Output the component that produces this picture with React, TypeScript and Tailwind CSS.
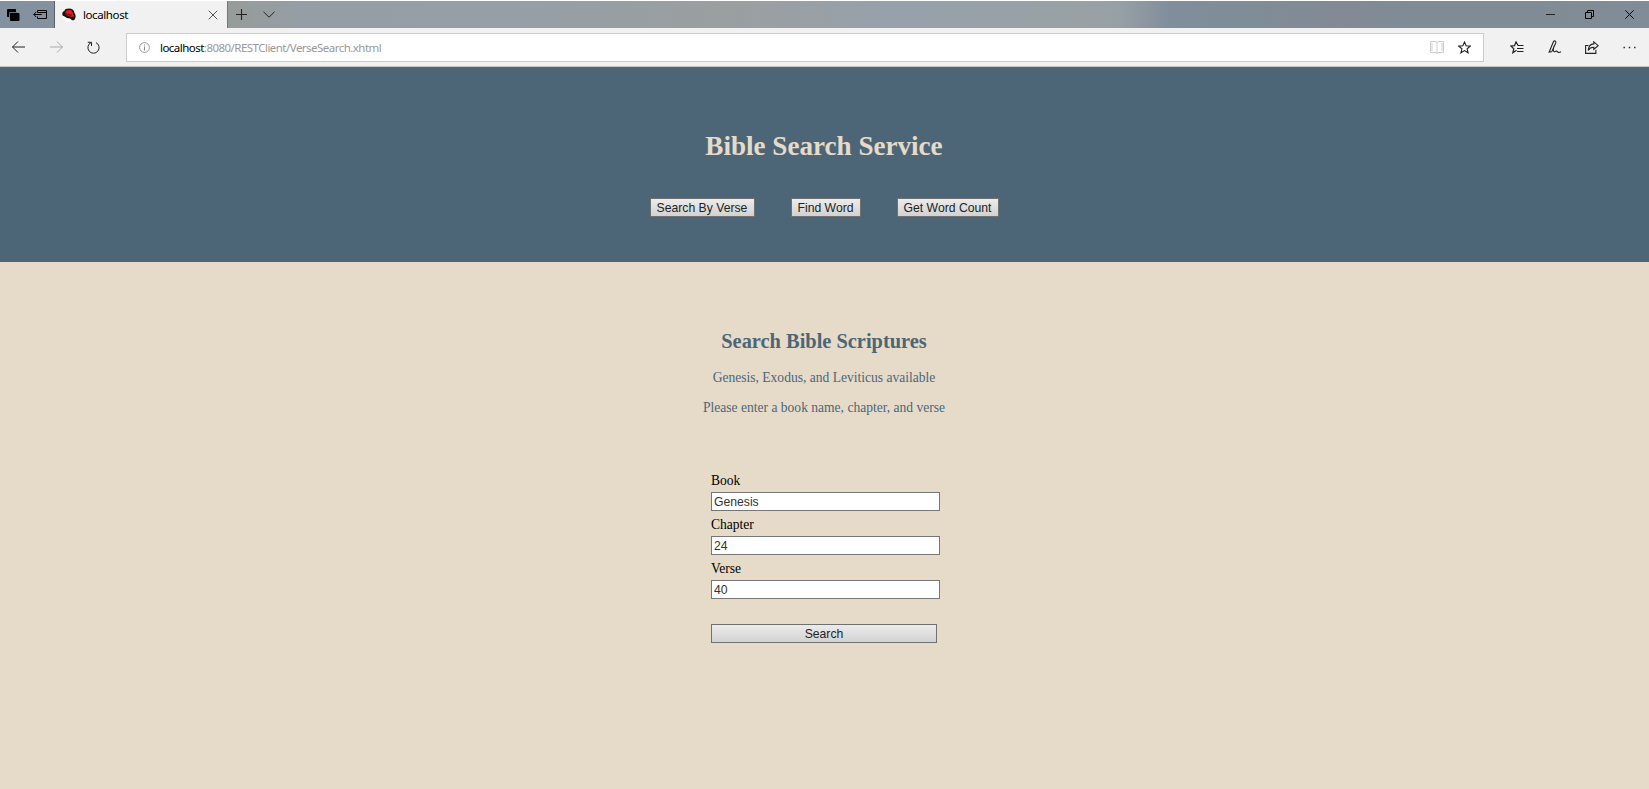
import React, { useState } from "react";

type IconProps = { w: number; h: number; children: React.ReactNode; className?: string };

function Icon({ w, h, children, className = "text-[#222]" }: IconProps) {
  return (
    <svg
      width={w}
      height={h}
      viewBox={`0 0 ${w} ${h}`}
      fill="none"
      stroke="currentColor"
      strokeWidth="1"
      className={`block shrink-0 ${className}`}
      aria-hidden="true"
    >
      {children}
    </svg>
  );
}

function Cell({ className, children }: { className: string; children: React.ReactNode }) {
  return <div className={`flex h-full shrink-0 items-center justify-center ${className}`}>{children}</div>;
}

function TitleBar() {
  return (
    <div className="flex h-7 shrink-0 border-t border-white bg-[linear-gradient(90deg,#84919f_0px,#84919f_54px,#959c98_228px,#959ea6_300px,#969fa8_500px,#9a9fa0_720px,#97a1ac_900px,#99a1a5_1080px,#97a0a6_1120px,#808d9b_1170px,#7f8d97_1260px,#838995_1340px,#7f8c96_1400px,#808c97_1649px)]">
      <div className="flex w-[55px] shrink-0 border-r border-[#58636c] pl-[7px]">
        <Cell className="w-3">
          <Icon w={13} h={12} className="text-black">
            <path d="M0.5 0.5h8v7h-8z" fill="currentColor" />
            <path d="M2.5 9v-5.5h8" stroke="#66727d" />
            <path d="M3.5 4.5h8.5v7H3.5z" fill="currentColor" />
          </Icon>
        </Cell>
        <Cell className="ml-[14px] w-[15px]">
          <Icon w={15} h={11} className="text-black">
            <path d="M4.5 3.5v-2h9v8h-9v-2M4.5 3.5h9M0.8 5.5h8M3.2 3L0.8 5.5L3.2 8" />
          </Icon>
        </Cell>
      </div>
      <div className="flex w-[172px] shrink-0 items-center bg-[#f1f1f1] pl-[7px]">
        <svg width="14" height="14" viewBox="0 0 14 14" className="block shrink-0" aria-hidden="true">
          <path d="M0.5 8L4 7L12 11L10 13.5Q5 14.5 2 12Z" fill="#fff" />
          <path d="M0.2 6Q0.2 3.8 2.5 2.8Q3 0.5 5.5 0.8Q8-0.2 10.3 1.3Q12.2 2.5 12.5 5Q14 7 13.5 9.5Q13.2 12 11 12.4Q9.2 12.2 8 10.6Q4.5 10.4 2.6 8.6Q0.2 8 0.2 6Z" fill="#171313" />
          <path d="M3.3 4.8Q3.5 2 5.5 2.2Q8 1.3 9.8 2.7Q11.1 4.4 11.1 6.4Q12.5 7.3 11.8 8.4Q9 9.3 5.8 7.8Q2.6 6.5 3.3 4.8Z" fill="#e3191b" />
          <path d="M3.3 5Q5.5 7.2 9.8 7.1" fill="none" stroke="#30100f" strokeWidth="0.9" />
        </svg>
        <span className="ml-[7px] text-[11.5px] leading-4 tracking-[-0.4px] text-black">localhost</span>
        <div className="mr-[9px] ml-auto">
          <Icon w={10} h={10} className="text-[#555]">
            <path d="M0.7 0.7L9.3 9.3M9.3 0.7L0.7 9.3" />
          </Icon>
        </div>
      </div>
      <div className="flex border-l border-[#717975]">
        <Cell className="w-[27px]">
          <Icon w={11} h={11}>
            <path d="M5.5 0v11M0 5.5h11" strokeWidth="1.1" />
          </Icon>
        </Cell>
        <Cell className="w-[28px]">
          <Icon w={12} h={7} className="text-[#222]">
            <path d="M0.5 0.8L6 6.2L11.5 0.8" />
          </Icon>
        </Cell>
      </div>
      <div className="ml-auto flex">
        <Cell className="w-[39px]">
          <Icon w={9} h={9}>
            <path d="M0 4.5h9" />
          </Icon>
        </Cell>
        <Cell className="w-[39px]">
          <Icon w={9} h={9} className="text-black">
            <path d="M0.5 2.5h6v6h-6zM2.5 2.5v-2h6v6h-2" />
          </Icon>
        </Cell>
        <Cell className="w-10">
          <Icon w={9} h={9} className="text-black">
            <path d="M0.3 0.3L8.7 8.7M8.7 0.3L0.3 8.7" />
          </Icon>
        </Cell>
      </div>
    </div>
  );
}

const STAR = "M6.5 1L8.1 4.8L12.2 5.1L9.1 7.8L10.1 11.8L6.5 9.6L2.9 11.8L3.9 7.8L0.8 5.1L4.9 4.8Z";

function AddressBar() {
  return (
    <div className="flex h-[39px] shrink-0 items-center border-b border-[#c5c5c2] bg-[#f1f1f1]">
      <Cell className="w-[37px]">
        <Icon w={13} h={12}>
          <path d="M0.5 6h12.5M6 0.5L0.5 6L6 11.5" />
        </Icon>
      </Cell>
      <Cell className="w-[38px]">
        <Icon w={13} h={12} className="text-[#aaa]">
          <path d="M0 6h12.5M7 0.5L12.5 6L7 11.5" />
        </Icon>
      </Cell>
      <Cell className="w-[37px]">
        <Icon w={13} h={13}>
          <path d="M4 1.6A5.6 5.6 0 1 0 9 1.6M0.8 1.3H4.5V5" />
        </Icon>
      </Cell>
      <div className="mt-px ml-[14px] flex h-[29px] w-[1358px] shrink-0 items-center border border-[#ccc] bg-white pl-[12px] text-[11.5px]">
        <Icon w={11} h={11} className="text-[#888]">
          <circle cx="5.5" cy="5.5" r="4.9" strokeWidth="0.8" />
          <path d="M5.5 4.5v4M5.5 2.5v1" />
        </Icon>
        <div className="ml-[10px] leading-4 tracking-[-0.53px] text-[#999]">
          <span className="text-black">localhost</span>:8080/RESTClient/VerseSearch.xhtml
        </div>
        <div className="mr-[12px] ml-auto flex items-center gap-[14px]">
          <Icon w={14} h={13} className="text-[#ccc]">
            <path d="M0.5 0.5h4.5q2 0 2 1q0-1 2-1h4.5v11h-4.5q-2 0-2 1q0-1-2-1H0.5zM7 1.5v11M2 2v8M12 2v8" />
          </Icon>
          <Icon w={13} h={13}>
            <path d={STAR} strokeWidth="1.1" />
          </Icon>
        </div>
      </div>
      <div className="ml-auto flex h-full">
        <Cell className="w-[38px]">
          <Icon w={14} h={13}>
            <path d="M13.5 4.5H8L6 0.8L4.5 4.6L0.8 5L3.8 7.7L2.8 11.8L6.5 9.2M7 7.5h6.5M7 10.5h6.5" strokeWidth="1.15" />
          </Icon>
        </Cell>
        <Cell className="w-[37px]">
          <Icon w={14} h={14}>
            <path d="M2.3 9.5L0.8 12.8M1.8 10.5L5.2 2.2Q6 0.4 7.2 1Q8.4 1.6 7.6 3.4L4 11.2Q3 12.7 1.6 11.2M6.8 4.8L5.6 7.5Q4.7 12.7 7.2 11.6Q8.7 10.5 9.6 11.8Q10.7 13.1 13 11.8" strokeWidth="1.1" />
          </Icon>
        </Cell>
        <Cell className="w-[37px]">
          <Icon w={14} h={13}>
            <path d="M3.5 4.5H0.6v7.9h10.3V8.8M8.8 0.8L13.2 4.7L8.8 8.3V6.3Q5 6.2 3.2 9.4Q3.5 3.3 8.8 2.9Z" strokeWidth="1.1" />
          </Icon>
        </Cell>
        <Cell className="w-[39px]">
          <Icon w={13} h={3} className="text-[#222]">
            <path d="M0.5 1.5h1.4M5.8 1.5h1.4M11.1 1.5h1.4" strokeWidth="1.4" />
          </Icon>
        </Cell>
      </div>
    </div>
  );
}

function FormButton({ label, className }: { label: string; className: string }) {
  return (
    <button
      type="button"
      className={`flex h-[19px] items-center justify-center border border-[#707070] bg-linear-to-b from-[#ececec] to-[#d2d2d2] font-['Liberation_Sans',Arial,sans-serif] text-[12.2px] leading-4 whitespace-nowrap text-[#222] ${className}`}
    >
      {label}
    </button>
  );
}

function Field({ label, initial }: { label: string; initial: string }) {
  const [value, setValue] = useState(initial);
  return (
    <label className="block h-11">
      <span className="block h-[19px] text-[13.55px] leading-4 text-black">{label}</span>
      <input
        value={value}
        onChange={(e) => setValue(e.target.value)}
        className="block h-[19px] w-[229px] border border-[#777] bg-white px-[2px] font-['Liberation_Sans',Arial,sans-serif] text-[12.2px] leading-4 text-[#333] outline-none"
      />
    </label>
  );
}

export default function App() {
  return (
    <div className="flex h-[789px] w-full flex-col overflow-hidden bg-[#e6dbc9] font-['Noto_Sans','Open_Sans',sans-serif]">
      <TitleBar />
      <AddressBar />
      <header className="flex h-[195px] shrink-0 flex-col items-center bg-[#4c6678] pt-[63px] pr-px font-['Liberation_Serif','Times_New_Roman',serif]">
        <h1 className="text-[27.1px] leading-8 font-bold text-[#e6dbc9]">Bible Search Service</h1>
        <nav className="mt-9 flex">
          <FormButton label="Search By Verse" className="w-[105px]" />
          <FormButton label="Find Word" className="ml-9 w-[70px]" />
          <FormButton label="Get Word Count" className="ml-9 w-[102px]" />
        </nav>
      </header>
      <main className="flex grow flex-col items-center pt-[67px] pr-px font-['Liberation_Serif','Times_New_Roman',serif] text-[#4c6678]">
        <h2 className="text-[20.4px] leading-6 font-bold">Search Bible Scriptures</h2>
        <p className="mt-[17px] text-[13.55px] leading-4">Genesis, Exodus, and Leviticus available</p>
        <p className="mt-[14px] text-[13.55px] leading-4">Please enter a book name, chapter, and verse</p>
        <form className="mt-[57px] ml-[3px] w-[229px]" onSubmit={(e) => e.preventDefault()}>
          <Field label="Book" initial="Genesis" />
          <Field label="Chapter" initial="24" />
          <Field label="Verse" initial="40" />
          <FormButton label="Search" className="mt-[19px] w-[226px]" />
        </form>
      </main>
    </div>
  );
}
